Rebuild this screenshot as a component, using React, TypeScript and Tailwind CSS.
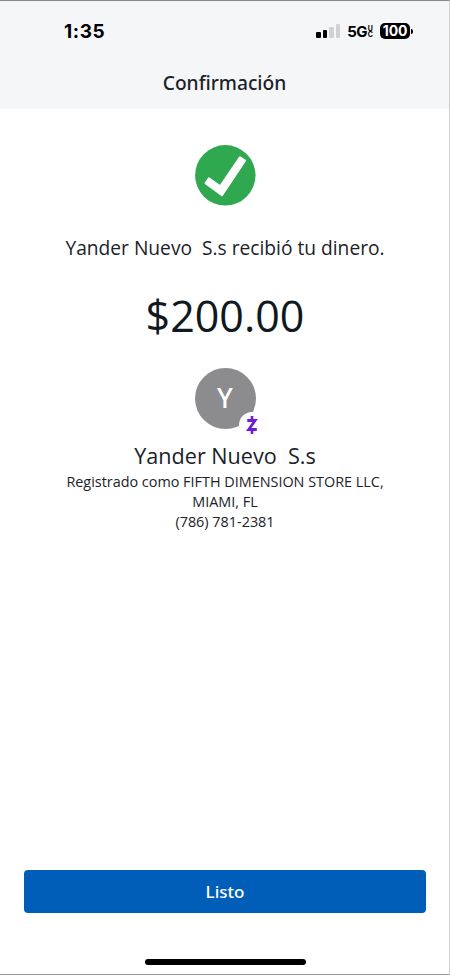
import React from 'react';

const signalBars = [
  { height: 'h-[6px]', color: 'bg-black' },
  { height: 'h-[8px]', color: 'bg-black' },
  { height: 'h-[11px]', color: 'bg-[#d0d1d3]' },
  { height: 'h-[14px]', color: 'bg-[#d0d1d3]' },
];

function StatusBar() {
  return (
    <div className="flex h-[60px] items-start justify-between pl-[64px] pr-[36px] pt-[19px] font-['Inter',sans-serif] text-black">
      <span className="text-[19px] font-bold leading-[23px] tracking-[0.6px]">1:35</span>
      <div className="flex items-start pt-[3px]">
        <div className="flex h-[15px] items-end gap-[2px]">
          {signalBars.map((bar, i) => (
            <span key={i} className={`w-[4.5px] rounded-[1px] ${bar.height} ${bar.color}`} />
          ))}
        </div>
        <span className="ml-[7px] text-[15px] font-bold leading-[18px] tracking-[-0.6px]">5G</span>
        <span className="ml-px mt-[3px] flex flex-col text-[7px] font-bold leading-[6px]">
          <span className="h-[6px]">U</span>
          <span className="h-[6px]">C</span>
        </span>
        <div className="ml-[7px] flex items-center">
          <span className="flex h-[16px] w-[30px] items-center justify-center rounded-[5px] bg-black text-[14px] font-bold leading-none tracking-[-0.2px] text-white">
            100
          </span>
          <span className="ml-px h-[5px] w-[2px] rounded-r-full bg-black" />
        </div>
      </div>
    </div>
  );
}

function SuccessIcon() {
  return (
    <svg className="size-[61px]" viewBox="0 0 61 61" fill="none">
      <circle cx="30.3" cy="30.3" r="30.2" fill="#2fa84f" />
      <path
        d="M13.9 33.3 10.5 38.2 27 50.3 50 15.7 44.9 12.4 25.2 41.3Z"
        fill="#fff"
        stroke="#fff"
        strokeWidth="2"
        strokeLinejoin="round"
      />
    </svg>
  );
}

function Avatar() {
  return (
    <div className="relative flex size-[61px] items-center justify-center rounded-full bg-[#8c8c8e]">
      <span className="pb-[2px] font-['Noto_Sans',sans-serif] text-[27px] font-medium leading-none text-white">Y</span>
      <span className="absolute left-[44px] top-[44px] flex size-[26px] items-center justify-center rounded-full bg-white">
        <svg className="h-[18px] w-[12px]" viewBox="0 0 12 18" fill="none" stroke="#6d1ed4">
          <path d="M1.3 4.5H9.1L2.7 13.5H10.8" strokeWidth="2.8" />
          <path d="M6 0V4M6 14V18" strokeWidth="2.6" />
        </svg>
      </span>
    </div>
  );
}

export default function App() {
  return (
    <div className="flex h-[975px] w-[450px] flex-col overflow-hidden border-b border-r border-t border-b-[#98989a] border-r-[#cfcfd1] border-t-[#8a8a8c] bg-white font-['Open_Sans',sans-serif] text-[#1b2228]">
      <header className="h-[108px] shrink-0 bg-[#f5f6f8]">
        <StatusBar />
        <h1 className="pt-[8px] text-center font-['Noto_Sans',sans-serif] text-[19.2px] font-medium leading-[28px]">
          Confirmación
        </h1>
      </header>

      <main className="flex flex-1 flex-col items-center pl-px pt-[36px]">
        <SuccessIcon />
        <p className="mt-[28px] whitespace-pre text-[19.2px] leading-[28px]">
          {'Yander Nuevo  S.s recibió tu dinero.'}
        </p>
        <p className="mt-[24px] text-[43px] leading-[60px] text-[#101820]">$200.00</p>
        <div className="mt-[22px]">
          <Avatar />
        </div>
        <h2 className="mt-[11px] whitespace-pre text-[21.6px] leading-[32px]">{'Yander Nuevo  S.s'}</h2>
        <div className="text-center text-[14.4px] leading-[20px]">
          <p>Registrado como FIFTH DIMENSION STORE LLC,</p>
          <p>MIAMI, FL</p>
          <p>(786) 781-2381</p>
        </div>
      </main>

      <footer className="flex flex-col items-center pb-[9px] pl-[24px] pr-[23px]">
        <button className="h-[43px] w-full rounded-[4px] bg-[#005eb8] font-['Noto_Sans',sans-serif] text-[17px] font-medium text-white">
          Listo
        </button>
        <div className="mt-[46px] h-[6px] w-[161px] rounded-full bg-black" />
      </footer>
    </div>
  );
}
